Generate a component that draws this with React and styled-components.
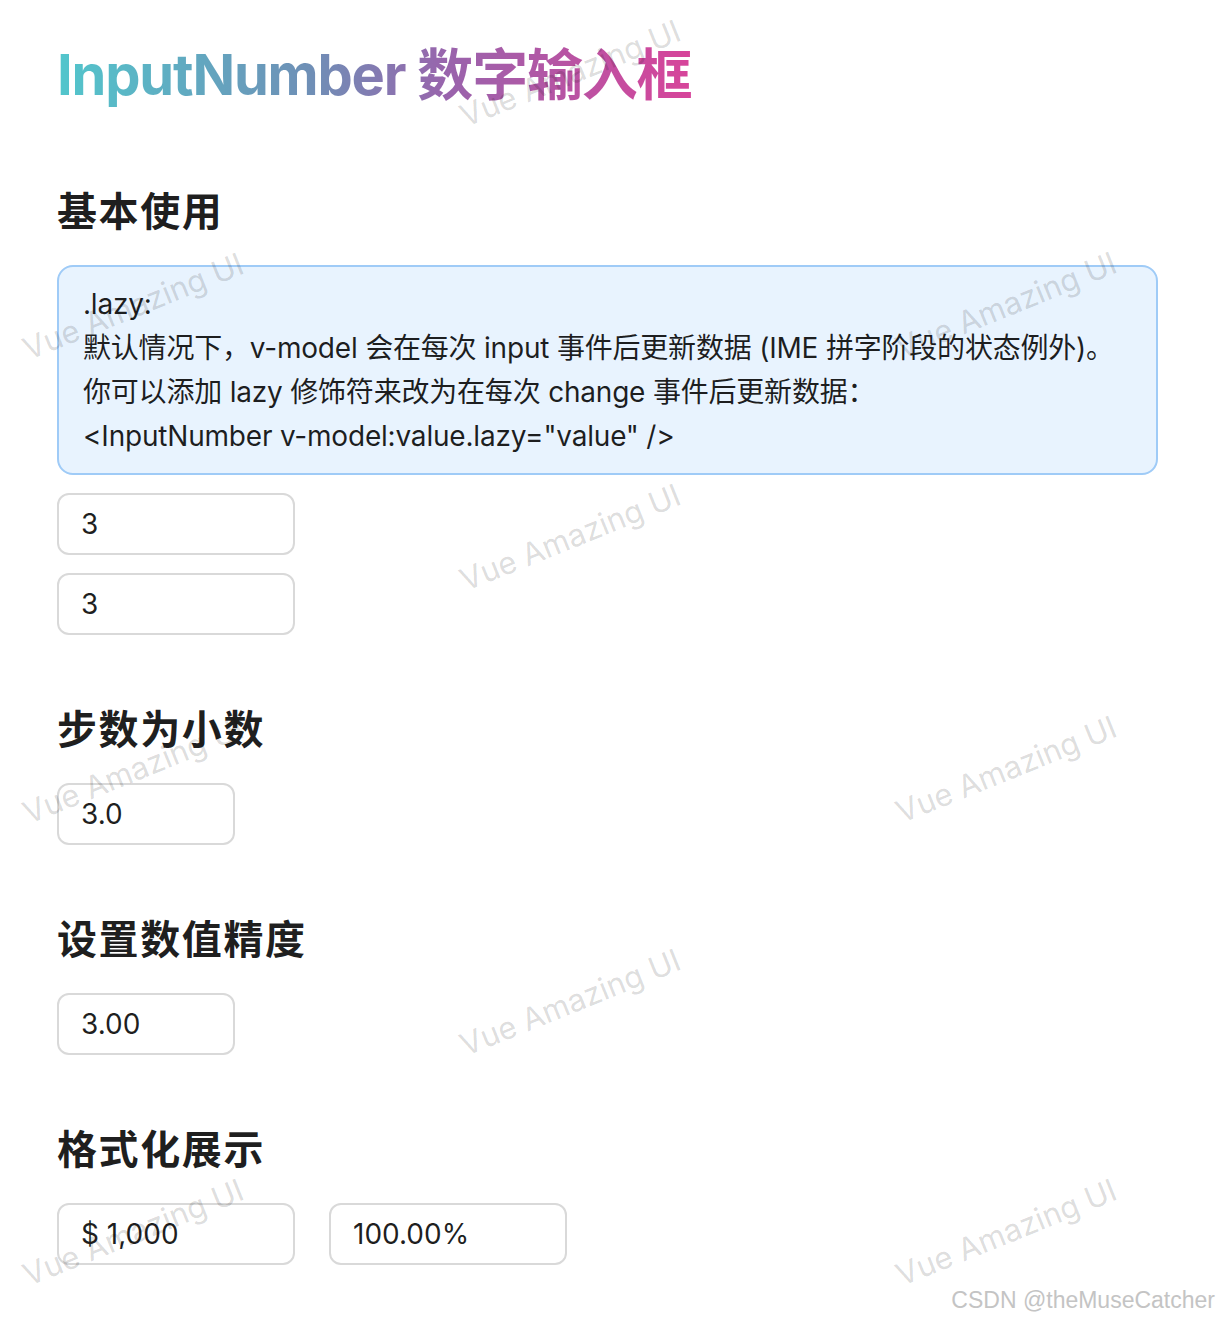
import React from "react";
import styled, { createGlobalStyle } from "styled-components";

const GlobalStyle = createGlobalStyle`
    html, body {
        margin: 0;
        padding: 0;
        background: #ffffff;
    }
    body {
        font-family: Inter, "Noto Sans CJK SC", sans-serif;
        color: rgba(0, 0, 0, 0.88);
    }
`

const Page = styled.div`
    position: relative;
    min-height: 1320px;
    overflow: hidden;
    padding: 40px 62px 0 57px;
    box-sizing: border-box;
`

const Title = styled.h1`
    display: inline-block;
    margin: 0;
    font-size: 56px;
    line-height: 70px;
    font-weight: 700;
    letter-spacing: -1.2px;
    background-image: linear-gradient(90deg, #52c6cc 0%, #6f8fb6 40%, #9a63ac 62%, #d7449a 100%);
    -webkit-background-clip: text;
    background-clip: text;
    color: transparent;
`

const Section = styled.section`
    margin-top: ${(p) => (p.$first ? 72 : 65)}px;
`

const Heading = styled.h2`
    margin: 0 0 23px;
    font-size: 40px;
    line-height: 60px;
    font-weight: 700;
    letter-spacing: 1.6px;
    color: rgba(0, 0, 0, 0.88);
`

const Alert = styled.div`
    box-sizing: border-box;
    height: 210px;
    padding: 15px 24px;
    border: 2px solid #9fcbf7;
    border-radius: 16px;
    background: #e8f3fe;
    font-size: 28px;
    line-height: 44px;
    letter-spacing: -0.2px;
    color: rgba(0, 0, 0, 0.88);
`

const Stack = styled.div`
    display: flex;
    flex-direction: column;
    align-items: flex-start;
    gap: 18px;
    margin-top: 18px;
`

const Row = styled.div`
    display: flex;
    gap: 34px;
`

const NumberInput = styled.div`
    box-sizing: border-box;
    width: ${(p) => p.$width || 238}px;
    height: 62px;
    padding: 0 22px;
    display: flex;
    align-items: center;
    border: 2px solid #d9d9d9;
    border-radius: 12px;
    background: #ffffff;
    font-size: 28px;
    color: rgba(0, 0, 0, 0.88);
`

const Marks = styled.div`
    position: absolute;
    inset: 0;
    pointer-events: none;
`

const Mark = styled.span`
    position: absolute;
    transform: translate(-50%, -50%) rotate(-22deg);
    white-space: nowrap;
    font-size: 31px;
    color: rgba(0, 0, 0, 0.15);
`

const Credit = styled.span`
    position: absolute;
    right: 5px;
    bottom: 6px;
    font-family: "Liberation Sans", sans-serif;
    font-size: 23px;
    color: #c4c4c4;
    text-shadow: 0 0 2px #ffffff, 0 0 2px #ffffff;
`

const marks = [
    [570, 73], [133, 306], [1006, 305],
    [570, 537], [133, 770], [1006, 769],
    [570, 1002], [133, 1232], [1006, 1232],
]

const App = () => {
    return (
        <>
            <GlobalStyle />
            <Page>
                <Title>InputNumber 数字输入框</Title>

                <Section $first>
                    <Heading>基本使用</Heading>
                    <Alert>
                        <div>.lazy:</div>
                        <div>默认情况下，v-model 会在每次 input 事件后更新数据 (IME 拼字阶段的状态例外)。</div>
                        <div>你可以添加 lazy 修饰符来改为在每次 change 事件后更新数据：</div>
                        <div>{'<InputNumber v-model:value.lazy="value" />'}</div>
                    </Alert>
                    <Stack>
                        <NumberInput>3</NumberInput>
                        <NumberInput>3</NumberInput>
                    </Stack>
                </Section>

                <Section>
                    <Heading>步数为小数</Heading>
                    <NumberInput $width={178}>3.0</NumberInput>
                </Section>

                <Section>
                    <Heading>设置数值精度</Heading>
                    <NumberInput $width={178}>3.00</NumberInput>
                </Section>

                <Section>
                    <Heading>格式化展示</Heading>
                    <Row>
                        <NumberInput>$ 1,000</NumberInput>
                        <NumberInput>100.00%</NumberInput>
                    </Row>
                </Section>

                <Marks>
                    {marks.map(([x, y], i) => (
                        <Mark key={i} style={{ left: x, top: y }}>Vue Amazing UI</Mark>
                    ))}
                </Marks>
                <Credit>CSDN @theMuseCatcher</Credit>
            </Page>
        </>
    )
}

export default App
